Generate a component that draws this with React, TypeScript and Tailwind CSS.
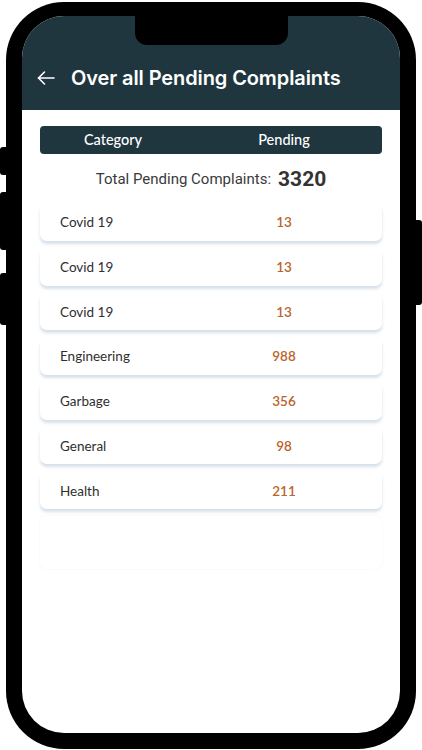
import React from "react";

const rows = [
  { name: "Covid 19", count: 13 },
  { name: "Covid 19", count: 13 },
  { name: "Covid 19", count: 13 },
  { name: "Engineering", count: 988 },
  { name: "Garbage", count: 356 },
  { name: "General", count: 98 },
  { name: "Health", count: 211 },
];

const BackArrow = () => (
  <svg width="18" height="14" viewBox="0 0 18 14" fill="none" stroke="white" strokeWidth="1.6" strokeLinecap="round" strokeLinejoin="round">
    <path d="M17 7H1.5" />
    <path d="M7.5 1L1.5 7l6 6" />
  </svg>
);

export default function App() {
  return (
    <div className="relative w-[422px] h-[750px] bg-white overflow-hidden">
      {/* side buttons */}
      <div className="absolute left-0 top-[147px] w-[8px] h-[28px] bg-black rounded-l-[3px]" />
      <div className="absolute left-0 top-[192px] w-[8px] h-[58px] bg-black rounded-l-[3px]" />
      <div className="absolute left-0 top-[273px] w-[8px] h-[52px] bg-black rounded-l-[3px]" />
      <div className="absolute right-0 top-[220px] w-[8px] h-[85px] bg-black rounded-r-[3px]" />

      {/* phone body */}
      <div className="absolute left-[6px] top-[2px] w-[410px] h-[747px] bg-black rounded-[58px] pl-[16px] pr-[16px] pt-[14px] pb-[16px]">
        <div className="relative w-full h-full bg-white rounded-[42px] overflow-hidden flex flex-col">
          {/* notch */}
          <div className="absolute left-[113px] top-0 w-[153px] h-[29px] bg-black rounded-b-[12px]" />

          {/* header */}
          <div className="h-[94px] shrink-0 bg-[#20363f] flex items-end pb-[18px] pl-[15px] gap-[16px]" style={{ fontFamily: "Inter, 'Noto Sans', sans-serif" }}>
            <div className="mb-[7px]"><BackArrow /></div>
            <span className="text-white text-[20px] font-semibold leading-[28px] tracking-[-0.1px]">Over all Pending Complaints</span>
          </div>

          {/* content */}
          <div className="px-[18px] pt-[16px] flex flex-col" style={{ fontFamily: "Lato, 'Open Sans', sans-serif" }}>
            <div className="h-[28px] bg-[#20363f] rounded-[4px] grid grid-cols-[146px_1fr] items-center text-white text-[14.5px] font-medium">
              <span className="text-center">Category</span>
              <span className="text-center">Pending</span>
            </div>

            <div className="h-[49px] flex items-center justify-center gap-[7px] pt-[2px]" style={{ fontFamily: "Roboto, 'Liberation Sans', sans-serif" }}>
              <span className="text-[15px] text-[#3a3a3a]">Total Pending Complaints:</span>
              <span className="text-[21px] font-bold text-[#333333]">3320</span>
            </div>

            <div className="flex flex-col gap-[6.7px]">
              {rows.map((r, i) => (
                <div
                  key={i}
                  className="h-[38px] bg-white rounded-[7px] grid grid-cols-[146px_1fr] items-center text-[13.5px] shadow-[0_3px_3px_rgba(120,155,185,0.3)] pt-[1px]"
                >
                  <span className="pl-[20px] text-[#2f2f2f]">{r.name}</span>
                  <span className="text-center text-[#b8642c] font-semibold">{r.count}</span>
                </div>
              ))}
              <div className="h-[53px] bg-white rounded-[7px] shadow-[0_0_2px_rgba(120,155,185,0.12)]" />
            </div>
          </div>
        </div>
      </div>
    </div>
  );
}
